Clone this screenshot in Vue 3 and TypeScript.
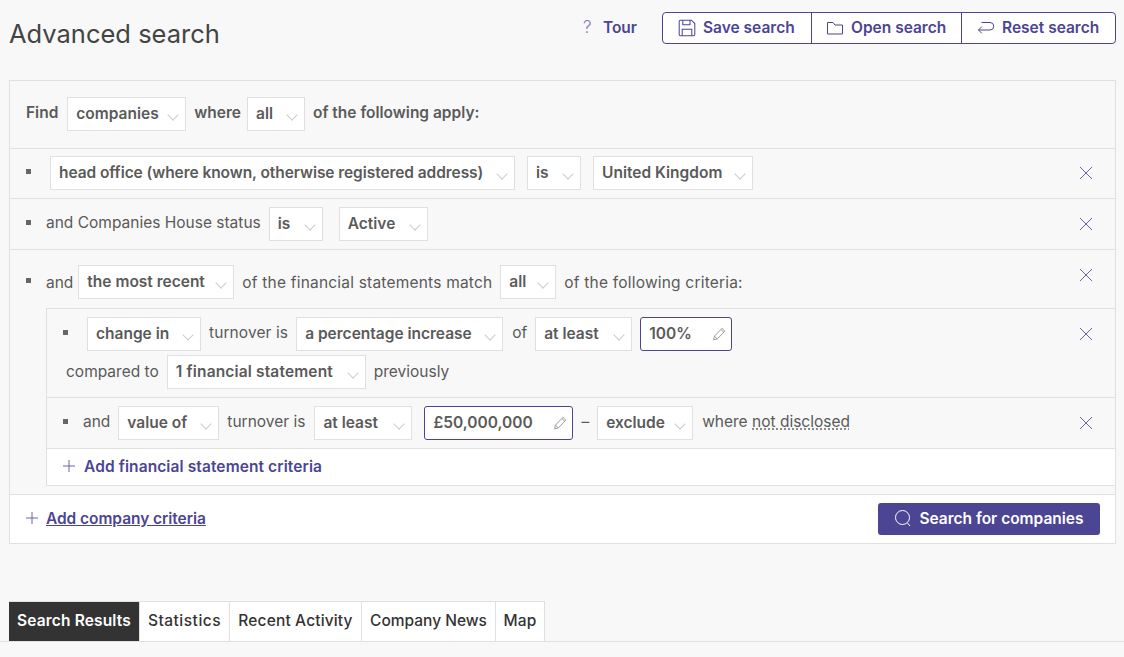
<script setup lang="ts">
const tabs = ['Search Results', 'Statistics', 'Recent Activity', 'Company News', 'Map']
</script>

<template>
  <div class="page">
    <header class="top">
      <h1>Advanced search</h1>
      <div class="actions">
        <a class="tour"><span class="q">?</span>Tour</a>
        <div class="btn-group">
          <button class="save">
            <svg width="18" height="18" viewBox="1.500 1.500 15 15" fill="none" stroke="#4b4594" stroke-width=".85">
              <path d="M2.500 3.500a1 1 0 0 1 1-1h9.200l2.800 2.800v9.200a1 1 0 0 1-1 1h-11a1 1 0 0 1-1-1z" />
              <path d="M5.500 2.500v3.800h6V2.500M5 15.500v-5.500h8v5.500" />
            </svg>
            Save search
          </button>
          <button class="open">
            <svg width="18" height="18" viewBox="0 0 18 18" fill="none" stroke="#4b4594" stroke-width="1">
              <path d="M1.500 3.500h5.500l2 2.500h7.500v9h-15z" />
            </svg>
            Open search
          </button>
          <button class="reset">
            <svg width="18" height="18" viewBox="0 0 18 18" fill="none" stroke="#4b4594" stroke-width="1">
              <path d="M4.500 3.500h8.500a3.700 3.700 0 0 1 0 7.500h-11.500M4.800 7.700l-3.300 3.300 3.300 3.300" />
            </svg>
            Reset search
          </button>
        </div>
      </div>
    </header>

    <section class="panel">
      <div class="find-row">
        <span class="lbl strong find">Find</span>
        <span class="sel w-companies">companies</span>
        <span class="lbl strong where-lbl">where</span>
        <span class="sel w-all">all</span>
        <span class="lbl strong">of the following apply:</span>
      </div>

      <div class="row row-head">
        <i class="bullet b-wide"></i>
        <span class="sel w-head">head office (where known, otherwise registered address)</span>
        <span class="sel w-is sp4">is</span>
        <span class="sel w-uk sp4">United Kingdom</span>
        <span class="close"><svg width="14" height="14" viewBox="0 0 14 14"><path d="M1 1l12 12M13 1L1 13" stroke="#6a65a8" fill="none" /></svg></span>
      </div>

      <div class="row row-status">
        <i class="bullet"></i>
        <span class="lbl">and Companies House status</span>
        <span class="sel w-is">is</span>
        <span class="sel w-active sp8">Active</span>
        <span class="close"><svg width="14" height="14" viewBox="0 0 14 14"><path d="M1 1l12 12M13 1L1 13" stroke="#6a65a8" fill="none" /></svg></span>
      </div>

      <div class="group">
        <div class="row group-head">
          <i class="bullet"></i>
          <span class="lbl">and</span>
          <span class="sel w-recent">the most recent</span>
          <span class="lbl wide">of the financial statements match</span>
          <span class="sel w-all2">all</span>
          <span class="lbl wide">of the following criteria:</span>
          <span class="close up"><svg width="14" height="14" viewBox="0 0 14 14"><path d="M1 1l12 12M13 1L1 13" stroke="#6a65a8" fill="none" /></svg></span>
        </div>

        <div class="nested">
          <div class="sub sub-one">
            <div class="row">
              <i class="bullet b-sub"></i>
              <span class="sel w-change">change in</span>
              <span class="lbl turn">turnover is</span>
              <span class="sel w-pct">a percentage increase</span>
              <span class="lbl of">of</span>
              <span class="sel w-least1">at least</span>
              <span class="inp w-inp1">100%<svg width="15" height="16" viewBox="0 0 14 14" fill="none" stroke="#999" stroke-width=".9"><path d="M1.500 12.500l.8-3.500 7-7.300 2.700 2.600-7 7.300zM8.300 2.800l2.700 2.600M2.300 9l2.700 2.600" /></svg></span>
              <span class="close"><svg width="14" height="14" viewBox="0 0 14 14"><path d="M1 1l12 12M13 1L1 13" stroke="#6a65a8" fill="none" /></svg></span>
            </div>
            <div class="row second">
              <span class="lbl">compared to</span>
              <span class="sel w-fin">1 financial statement</span>
              <span class="lbl">previously</span>
            </div>
          </div>

          <div class="sub">
            <div class="row">
              <i class="bullet b-sub2"></i>
              <span class="lbl">and</span>
              <span class="sel w-value">value of</span>
              <span class="lbl">turnover is</span>
              <span class="sel w-least2">at least</span>
              <span class="inp w-inp2">£50,000,000<svg width="15" height="16" viewBox="0 0 14 14" fill="none" stroke="#999" stroke-width=".9"><path d="M1.500 12.500l.8-3.500 7-7.300 2.700 2.600-7 7.300zM8.300 2.800l2.700 2.600M2.300 9l2.700 2.600" /></svg></span>
              <span class="lbl dash">–</span>
              <span class="sel w-excl">exclude</span>
              <span class="lbl where">where <span class="dotted">not disclosed</span></span>
              <span class="close"><svg width="14" height="14" viewBox="0 0 14 14"><path d="M1 1l12 12M13 1L1 13" stroke="#6a65a8" fill="none" /></svg></span>
            </div>
          </div>

          <div class="add-fin">
            <svg width="12" height="12" viewBox="0 0 12 12"><path d="M6 0v12M0 6h12" stroke="#6a65a8" fill="none" /></svg>
            <a>Add financial statement criteria</a>
          </div>
        </div>
      </div>

      <div class="foot">
        <div class="add-co">
          <svg width="12" height="12" viewBox="0 0 12 12"><path d="M6 0v12M0 6h12" stroke="#6a65a8" fill="none" /></svg>
          <a>Add company criteria</a>
        </div>
        <button class="go">
          <svg width="18" height="18" viewBox="0 0 18 18" fill="none" stroke="#fff"><circle cx="8.500" cy="8.500" r="7" /><path d="M13.500 14l2.500 3" /></svg>
          Search for companies
        </button>
      </div>
    </section>

    <nav class="tabs">
      <a v-for="(t, i) in tabs" :key="t" :class="{ active: i === 0 }">{{ t }}</a>
    </nav>
  </div>
</template>

<style>
html, body {
  margin: 0;
  background: #f8f8f8;
}
</style>

<style scoped>
.page {
  height: 657px;
  overflow: hidden;
  background: #f8f8f8;
  font-family: Inter, "Liberation Sans", sans-serif;
  font-size: 15.5px;
  color: #5a5a5a;
}

.top {
  display: flex;
  justify-content: space-between;
  height: 80px;
  padding: 0 8px 0 9px;
}

h1 {
  margin: 18px 0 0;
  font-size: 25.5px;
  line-height: 32px;
  font-weight: 400;
  color: #444;
}

.actions {
  display: flex;
  align-items: flex-start;
  padding-top: 12px;
}

.tour {
  display: flex;
  align-items: center;
  height: 30px;
  padding-bottom: 2px;
  margin-right: 25px;
  color: #4b4594;
  font-weight: 600;
}

.q {
  width: 20px;
  font-size: 17px;
  font-weight: 300;
  color: #7a76b2;
}

.btn-group {
  display: flex;
  height: 32px;
  box-sizing: border-box;
  border: 1px solid #4b4594;
  border-radius: 4px;
  background: #fff;
}

.btn-group button {
  display: flex;
  align-items: center;
  gap: 7px;
  padding: 0 0 2px 15px;
  border: 0;
  border-left: 1px solid #4b4594;
  background: none;
  font: inherit;
  font-weight: 600;
  color: #4b4594;
}

.btn-group .save { width: 148px; border-left: 0; }
.btn-group .open { width: 150px; padding-left: 14px; }
.btn-group .reset { width: 154px; }

.btn-group svg { margin-top: 2px; }

.panel {
  margin: 0 8px 0 9px;
  border: 1px solid #e0e0e0;
}

.find-row {
  display: flex;
  align-items: center;
  gap: 8px;
  height: 67px;
  padding: 0 0 2px 16px;
  box-sizing: border-box;
}

.find { margin-right: 1px; }
.where-lbl { margin-right: -2px; }

.row {
  display: flex;
  align-items: center;
  gap: 8px;
}

.row-head,
.row-status {
  padding: 7px 22px 8px 16px;
  border-top: 1px solid #e0e0e0;
}

.row-status {
  padding-top: 8px;
}

.lbl {
  white-space: nowrap;
  margin-top: -3px;
}

.wide { letter-spacing: .2px; }
.turn { letter-spacing: .1px; }
.of { margin-left: 1px; }

.strong {
  font-weight: 600;
}

.group-head .lbl { margin-top: 0; }
.second .lbl { margin-top: -1px; }

.bullet {
  flex: none;
  width: 5px;
  height: 5px;
  margin-top: -4px;
  margin-right: 7px;
  background: #666;
}

.b-wide { margin-right: 11px; }

.sel {
  position: relative;
  display: flex;
  align-items: center;
  flex: none;
  height: 34px;
  box-sizing: border-box;
  padding: 0 0 1px 8px;
  border: 1px solid #e0e0e0;
  background: #fff;
  font-weight: 600;
  white-space: nowrap;
}

.sel::after {
  content: "";
  position: absolute;
  right: 8px;
  top: 13px;
  width: 7px;
  height: 7px;
  border-right: 1px solid #ccc;
  border-bottom: 1px solid #ccc;
  transform: rotate(45deg);
}

.sp4 { margin-left: 4px; }
.sp8 { margin-left: 8px; }

.w-companies { width: 119px; }
.w-all { width: 58px; }
.w-head { width: 465px; letter-spacing: -.07px; }
.w-is { width: 54px; }
.w-uk { width: 160px; }
.w-active { width: 89px; }
.w-recent { width: 156px; margin-left: -3px; }
.w-all2 { width: 56px; }
.w-change { width: 114px; }
.w-pct { width: 207px; }
.w-least1 { width: 97px; }
.w-fin { width: 199px; letter-spacing: .15px; }
.w-value { width: 101px; }
.w-least2 { width: 98px; margin-left: 1px; }
.w-excl { width: 96px; }

.inp {
  position: relative;
  display: flex;
  align-items: center;
  justify-content: space-between;
  flex: none;
  height: 34px;
  box-sizing: border-box;
  padding: 0 4px 1px 8px;
  border: 1px solid #4b4594;
  border-radius: 3px;
  background: #fff;
  font-weight: 600;
}

.w-inp1 { width: 92px; }
.w-inp2 { width: 149px; margin-left: 4px; }

.dash { margin-right: 0; }
.where { margin-left: 1px; }

.dotted {
  text-decoration: underline dotted #666;
  text-underline-offset: 2px;
}

.close {
  display: flex;
  margin-left: auto;
}

.close svg {
  display: block;
}

.group {
  border-top: 1px solid #e0e0e0;
  padding-bottom: 8px;
}

.group-head {
  height: 34px;
  padding: 15px 22px 9px 16px;
}

.close.up {
  margin-top: -14px;
}

.nested {
  margin-left: 36px;
  border: 1px solid #e0e0e0;
  border-right: 0;
}

.sub {
  padding: 8px 22px 8px 16px;
  border-bottom: 1px solid #e0e0e0;
}

.b-sub { margin-right: 11px; }

.second {
  margin-top: 4px;
  padding-left: 3px;
}

.add-fin {
  display: flex;
  align-items: center;
  gap: 9px;
  height: 34px;
  padding: 0 0 2px 16px;
  background: #fff;
  color: #4b4594;
  font-weight: 600;
  letter-spacing: .1px;
}

.foot {
  display: flex;
  align-items: center;
  justify-content: space-between;
  height: 48px;
  padding: 0 15px 0 16px;
  border-top: 1px solid #e0e0e0;
  background: #fff;
}

.add-co {
  display: flex;
  align-items: center;
  gap: 8px;
  padding-bottom: 2px;
  color: #4b4594;
  font-weight: 600;
  letter-spacing: -.05px;
}

.add-co a {
  text-decoration: underline;
}

.go {
  display: flex;
  align-items: center;
  justify-content: center;
  gap: 7px;
  width: 222px;
  height: 32px;
  padding: 0 0 2px;
  border: 0;
  border-radius: 3px;
  background: #4b4594;
  color: #fff;
  font: inherit;
  font-weight: 600;
}

.tabs {
  display: flex;
  margin-top: 57px;
  padding-left: 9px;
  height: 40px;
  border-bottom: 1px solid #e0e0e0;
}

.tabs a {
  display: flex;
  align-items: center;
  justify-content: center;
  box-sizing: border-box;
  padding-bottom: 2px;
  border: 1px solid #e0e0e0;
  border-left: 0;
  border-bottom: 0;
  background: #fff;
  color: #333;
  font-weight: 500;
  letter-spacing: .15px;
}

.tabs a:nth-child(1) { width: 131px; }
.tabs a:nth-child(2) { width: 90px; letter-spacing: .5px; }
.tabs a:nth-child(3) { width: 132px; }
.tabs a:nth-child(4) { width: 134px; letter-spacing: 0; }
.tabs a:nth-child(5) { width: 49px; }

.tabs a.active {
  background: #333;
  color: #fff;
  font-weight: 600;
}
</style>
